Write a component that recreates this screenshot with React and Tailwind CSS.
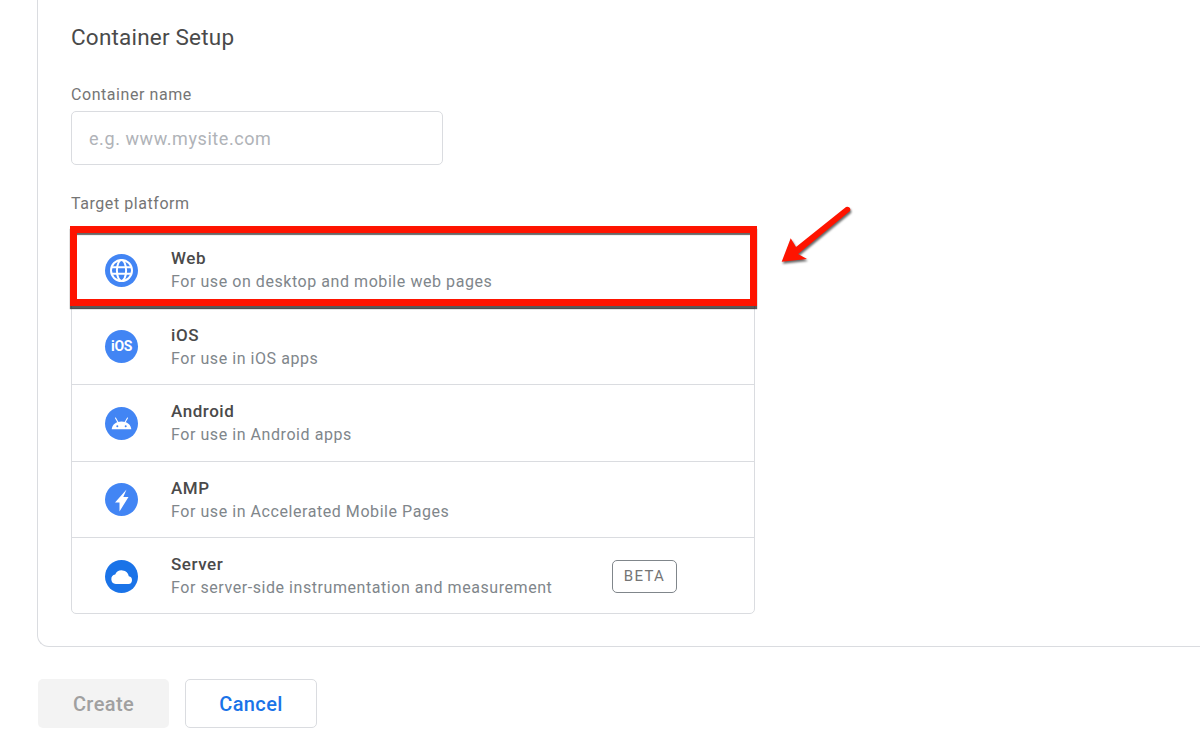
import React from 'react';

const GlobeIcon = () => (
  <svg viewBox="0 0 33 33" className="h-[33px] w-[33px]">
    <circle cx="16.5" cy="16.5" r="16.5" fill="#4285f4" />
    <g fill="none" stroke="#fff" strokeWidth="2">
      <circle cx="16.5" cy="16.5" r="10.5" />
      <ellipse cx="16.5" cy="16.5" rx="4.6" ry="10.5" />
      <path d="M6.5 13.2h20M6.5 19.8h20" />
    </g>
  </svg>
);

const IosIcon = () => (
  <div className="flex h-[33px] w-[33px] items-center justify-center rounded-full bg-[#4285f4] text-[14px] font-bold tracking-[-0.4px] text-white">
    iOS
  </div>
);

const AndroidIcon = () => (
  <svg viewBox="0 0 33 33" className="h-[33px] w-[33px]">
    <circle cx="16.5" cy="16.5" r="16.5" fill="#4285f4" />
    <path d="M6.700 22.300c.3-4.700 4.200-7.900 9.800-7.900s9.500 3.200 9.800 7.900z" fill="#fff" />
    <path d="M10.500 11l2.300 4M22.500 11l-2.300 4" stroke="#fff" strokeWidth="1.100" strokeLinecap="round" />
    <circle cx="12.300" cy="19.300" r="1" fill="#4285f4" />
    <circle cx="20.700" cy="19.300" r="1" fill="#4285f4" />
  </svg>
);

const BoltIcon = () => (
  <svg viewBox="0 0 33 33" className="h-[33px] w-[33px]">
    <circle cx="16.500" cy="16.500" r="16.500" fill="#4285f4" />
    <path d="M21.500 6.500L10 19.500h4.500L14.500 28.500L23.500 14h-5.200z" fill="#fff" />
  </svg>
);

const CloudIcon = () => (
  <svg viewBox="0 0 33 33" className="h-[33px] w-[33px]">
    <circle cx="16.500" cy="16.500" r="16.500" fill="#1a73e8" />
    <path d="M10.800 24a4.800 4.800 0 0 1-.6-9.500 7.200 7.200 0 0 1 13.600 1.700 3.950 3.950 0 0 1-.3 7.800z" fill="#fff" />
  </svg>
);

const platforms = [
  { name: 'Web', desc: 'For use on desktop and mobile web pages', Icon: GlobeIcon },
  { name: 'iOS', desc: 'For use in iOS apps', Icon: IosIcon },
  { name: 'Android', desc: 'For use in Android apps', Icon: AndroidIcon },
  { name: 'AMP', desc: 'For use in Accelerated Mobile Pages', Icon: BoltIcon },
  { name: 'Server', desc: 'For server-side instrumentation and measurement', Icon: CloudIcon, beta: true },
];

const PlatformRow = ({ name, desc, Icon, beta }) => (
  <div className="flex h-[76.500px] items-center border-b border-[#dadce0] pt-[1px] pl-[33px] last:h-[75px] last:border-b-0 last:pt-[1px]">
    <Icon />
    <div className="ml-[33px] w-[441px]">
      <div className="text-[17px] leading-[22px] font-medium tracking-[0.55px] text-[#4a4a4a]">{name}</div>
      <div className="mt-[2px] text-[16px] leading-[22px] tracking-[0.56px] text-[#80868b]">{desc}</div>
    </div>
    {beta && (
      <span className="flex h-[33px] w-[65px] items-center justify-center rounded-[5px] border border-[#80868b] text-[15px] tracking-[1.3px] text-[#757575]">
        BETA
      </span>
    )}
  </div>
);

export default function App() {
  return (
    <div className="relative h-[750px] w-[1200px] overflow-hidden bg-white font-['Roboto',sans-serif]">
      <div className="ml-[37px] h-[647px] w-[1300px] rounded-bl-[12px] border-b border-l border-[#dadce0] pt-[22px] pl-[33px]">
        <h1 className="text-[22.500px] leading-[30px] font-normal tracking-[0.2px] text-[#4a4a4a]">Container Setup</h1>
        <label className="mt-[32px] block text-[16px] leading-[22px] tracking-[0.56px] text-[#757575]">Container name</label>
        <div className="mt-[5px] flex h-[54px] w-[372px] items-center rounded-[5px] border border-[#dadce0] pl-[17px] text-[18px] tracking-[0.58px] text-[#b0b3b8]">
          e.g. www.mysite.com
        </div>
        <div className="mt-[28px] text-[16px] leading-[22px] tracking-[0.56px] text-[#757575]">Target platform</div>
        <div className="mt-[16px] w-[684px] rounded-[5px] border border-[#dadce0]">
          {platforms.map((p) => (
            <PlatformRow key={p.name} {...p} />
          ))}
        </div>
      </div>

      <div className="mt-[32px] ml-[38px] flex gap-[16px]">
        <button className="h-[49px] w-[131px] rounded-[5px] bg-[#f3f3f3] pt-[1px] text-[20px] font-medium tracking-[0.4px] text-[#a0a0a0]">Create</button>
        <button className="h-[49px] w-[132px] rounded-[5px] border border-[#dadce0] bg-white pt-[1px] text-[20px] font-medium tracking-[0.4px] text-[#1a73e8]">Cancel</button>
      </div>

      {/* annotation over the screenshot */}
      <div className="absolute top-[226px] left-[70px] h-[80px] w-[687px] border-[7px] border-[#fe1400] shadow-[0_3px_1px_rgba(0,0,0,0.65),inset_0_3px_1px_-1px_rgba(0,0,0,0.6)]" />
      <svg className="absolute top-[200px] left-[775px] h-[75px] w-[85px] drop-shadow-[1px_2px_1px_rgba(0,0,0,0.6)]" viewBox="0 0 85 75">
        <path d="M6.700 61.700L15.700 38.300L21 47L71 7A3 3 0 0 1 75 11L23 54L32 59Z" fill="#fe1400" />
      </svg>
    </div>
  );
}
